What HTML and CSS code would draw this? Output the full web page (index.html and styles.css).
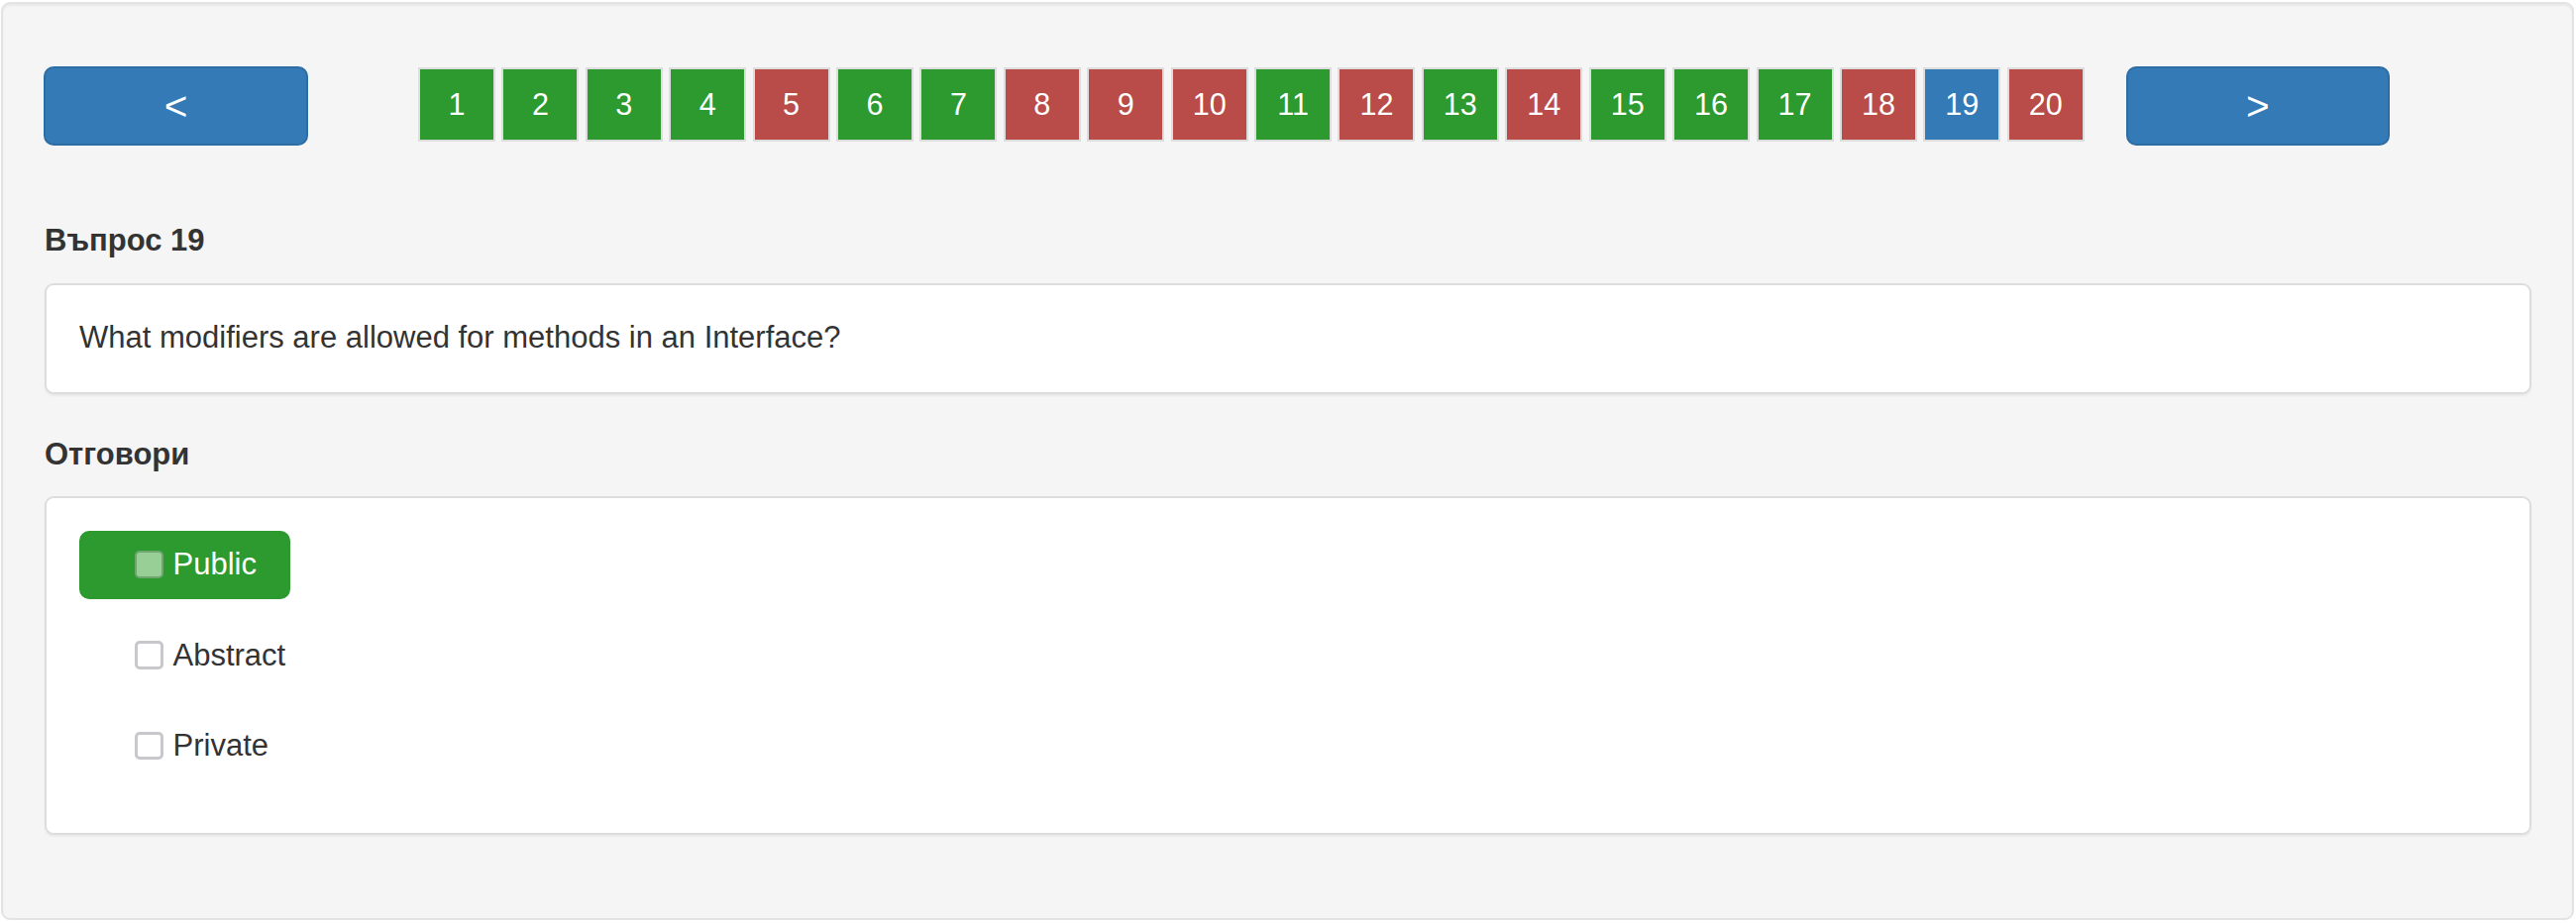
FILE: index.html
```html
<!DOCTYPE html>
<html lang="bg">
<head>
<meta charset="utf-8">
<title>Тест</title>
<link rel="stylesheet" href="styles.css">
</head>
<body>
<div class="well">
  <div class="nav">
    <div class="btn btn-prev">&lt;</div>
    <div class="pages">
      <div class="pg ok">1</div>
      <div class="pg ok">2</div>
      <div class="pg ok">3</div>
      <div class="pg ok">4</div>
      <div class="pg bad">5</div>
      <div class="pg ok">6</div>
      <div class="pg ok">7</div>
      <div class="pg bad">8</div>
      <div class="pg bad">9</div>
      <div class="pg bad">10</div>
      <div class="pg ok">11</div>
      <div class="pg bad">12</div>
      <div class="pg ok">13</div>
      <div class="pg bad">14</div>
      <div class="pg ok">15</div>
      <div class="pg ok">16</div>
      <div class="pg ok">17</div>
      <div class="pg bad">18</div>
      <div class="pg cur">19</div>
      <div class="pg bad">20</div>
    </div>
    <div class="btn btn-next">&gt;</div>
  </div>

  <div class="heading heading-q">Въпрос 19</div>
  <div class="panel panel-q">What modifiers are allowed for methods in an Interface?</div>

  <div class="heading heading-a">Отговори</div>
  <div class="panel panel-a">
    <div class="answer selected"><span class="cb"></span><span class="txt">Public</span></div>
    <div class="answer"><span class="cb"></span><span class="txt">Abstract</span></div>
    <div class="answer"><span class="cb"></span><span class="txt">Private</span></div>
  </div>
</div>
</body>
</html>
```
FILE: styles.css
```css
html, body {
  margin: 0;
  padding: 0;
  background: #ffffff;
}
body {
  font-family: "Liberation Sans", Arial, sans-serif;
  color: #333333;
}
.well {
  box-sizing: border-box;
  width: 2597px;
  margin: 2px 0 0 1px;
  padding: 63px 41px 84px 42px;
  background: #f5f5f5;
  border: 2px solid #e3e3e3;
  border-radius: 9px;
  box-shadow: inset 0 2px 2px rgba(0, 0, 0, 0.05);
}
.nav {
  display: flex;
  align-items: flex-start;
}
.btn {
  box-sizing: border-box;
  height: 80px;
  display: flex;
  align-items: center;
  justify-content: center;
  background: #337ab7;
  border: 2px solid #2e6da4;
  border-radius: 10px;
  color: #ffffff;
  font-size: 40.5px;
  line-height: 1;
}
.btn-prev {
  width: 267px;
  margin-left: -1px;
  margin-right: 111px;
}
.btn-next {
  width: 266px;
  margin-left: 42px;
}
.pages {
  display: flex;
  gap: 6.42px;
  margin-top: 1px;
}
.pg {
  box-sizing: border-box;
  width: 78px;
  height: 74.7px;
  border: 2px solid #dddddd;
  display: flex;
  align-items: center;
  justify-content: center;
  color: #ffffff;
  font-size: 30.6px;
}
.ok { background: #2c9a2e; }
.bad { background: #b94b49; }
.cur { background: #337ab7; }
.heading {
  font-weight: bold;
  font-size: 31px;
  line-height: 44.3px;
}
.heading-q { margin: 74.3px 0 20.1px; }
.heading-a { margin: 39.3px 0 19.6px; }
.panel {
  background: #ffffff;
  border: 2px solid #dddddd;
  border-radius: 9px;
  box-shadow: 0 2px 2px rgba(0, 0, 0, 0.05);
}
.panel-q {
  padding: 31px 33px 33px;
  font-size: 31px;
  line-height: 44.3px;
}
.panel-a {
  display: flex;
  flex-direction: column;
  align-items: flex-start;
  gap: 22.5px;
  padding: 32.5px 33px 53.3px;
}
.answer {
  box-sizing: border-box;
  height: 69px;
  display: flex;
  align-items: center;
  gap: 10px;
  padding: 0 34px 0 56px;
  border-radius: 10px;
  font-size: 31px;
  line-height: 44px;
}
.answer.selected {
  background: #2c9a2e;
  color: #ffffff;
}
.cb {
  box-sizing: border-box;
  width: 28.5px;
  height: 28.5px;
  background: #ffffff;
  border: 3px solid #c7c7cc;
  border-radius: 5px;
}
.answer.selected .cb {
  background: #97cf97;
  border: 2.5px solid #6fa771;
}
```
